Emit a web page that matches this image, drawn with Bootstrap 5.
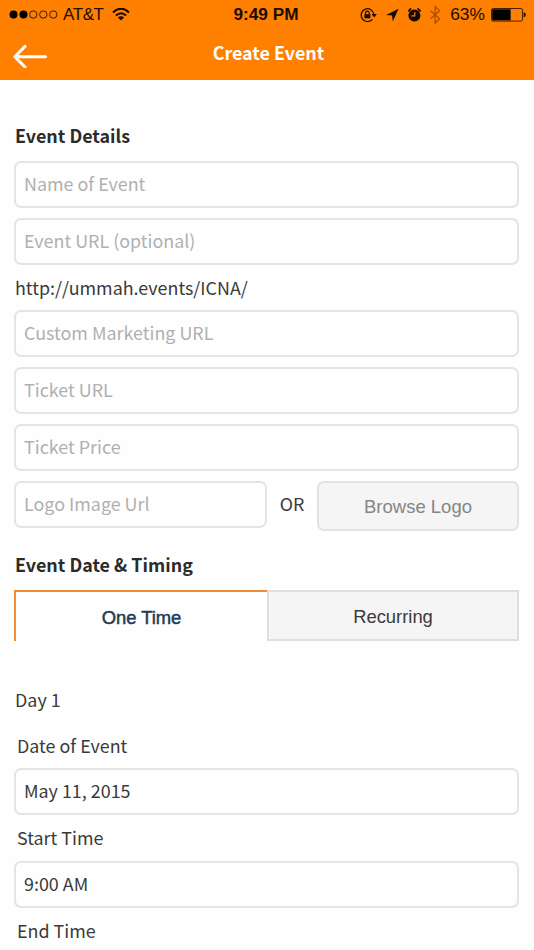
<!DOCTYPE html>
<html lang="en">
<head>
<meta charset="utf-8">
<meta name="viewport" content="width=device-width, initial-scale=1">
<title>Create Event</title>
<link href="https://cdn.jsdelivr.net/npm/bootstrap@5.3.0/dist/css/bootstrap.min.css" rel="stylesheet">
<style>
  body { font-family: "Noto Sans CJK SC", sans-serif; font-size: 17.9px; line-height: 26px; color: #3a3a3a; height: 950px; overflow: hidden; background: #fefefe; }
  .app-header { background: #ff8000; height: 80px; }
  .status-bar { height: 29px; font-family: "Liberation Sans", Arial, sans-serif; font-size: 17px; line-height: 29px; color: #1c0c00; }
  .status-side { flex: 1 1 0; }
  .status-bar svg, .title-bar svg { display: block; flex: none; }
  .carrier { letter-spacing: -.4px; margin-left: 5px; }
  .wifi { margin-left: 8px; }
  .clock { font-size: 17.2px; padding-right: 2px; }
  .battery-text { font-size: 17.4px; margin-left: 3px; }
  .title-bar { height: 51px; color: #fff; }
  .title-bar h1 { font-size: 17.9px; line-height: 26px; padding: 0 0 5px 3px; }
  .title-side { width: 60px; padding-left: 13px; }
  .page-body { padding: 31px 15px 0 14px; }
  .section-title { font-size: 17.9px; line-height: 26px; color: #2b2b2b; padding: 11px 0 13px 1px; }
  .form-control { height: 47px; border: 2px solid #e4e4e4; border-radius: 7px; padding: 0 8px 3px; font-size: 17.9px; line-height: 26px; color: #3a3a3a; background: #fefefe; }
  .form-control::placeholder { color: #b0b0b0; }
  .stack { display: grid; row-gap: 10px; }
  .url-note { height: 45px; padding: 9px 0 0 1px; }
  .logo-row { margin-top: 10px; height: 50px; }
  .logo-field { width: 253px; }
  .or-text { width: 50px; line-height: 44px; }
  .browse { height: 50px; font-family: "Liberation Sans", Arial, sans-serif; font-size: 18.5px; color: #858585; background: #f5f5f5; border: 2px solid #e2e2e2; border-radius: 7px; padding: 1px 0 0; }
  .timing-title { margin-top: 9px; }
  .tabs { height: 51px; font-family: "Liberation Sans", Arial, sans-serif; font-size: 18.4px; }
  .tabs .nav-link { height: 51px; border-radius: 0; padding: 2px 0 0; color: #3a3a3a; background: #f5f5f5; border: 2px solid #dfdfdf; width: 252px; flex: none; }
  .tabs .nav-link.active { color: #1e3c58; background: #fefefe; border: 0 solid #ee8f35; border-width: 2px 0 0 2px; width: 253px; -webkit-text-stroke: .5px #1e3c58; }
  .day-title { margin: 45px 0 10px 1px; height: 26px; }
  .form-label { display: block; margin: 0; padding-left: 3px; height: 46px; padding-top: 10px; }
  .time-label { height: 46px; padding-top: 9px; }
</style>
</head>
<body>
<header class="app-header">
  <div class="status-bar d-flex align-items-center">
    <div class="status-side d-flex align-items-center">
      <svg class="ms-2" width="50" height="12" viewBox="0 0 50 12" fill="none" stroke="#3a1c00" stroke-width="1"><circle cx="5.5" cy="5.5" r="4" fill="#000" stroke="none"/><circle cx="15.5" cy="5.5" r="4" fill="#000" stroke="none"/><circle cx="25.3" cy="5.5" r="3.7"/><circle cx="35.3" cy="5.5" r="3.7"/><circle cx="45.3" cy="5.5" r="3.7"/></svg>
      <span class="carrier">AT&amp;T</span>
      <svg class="wifi" width="18" height="14" viewBox="0 0 18 14" fill="none" stroke="#180800" stroke-width="2"><path d="M1 4.5Q9-3.1 17 4.5M3.9 7.6Q9 2.9 14.1 7.6"/><path d="M9 12.5 5.9 9.5Q9 6.9 12.1 9.5Z" fill="#180800" stroke="none"/></svg>
    </div>
    <strong class="clock">9:49 PM</strong>
    <div class="status-side d-flex align-items-center justify-content-end">
      <svg width="88" height="22" viewBox="0 0 88 22" fill="none" stroke="#1c0c00"><path d="M13.4 15.3A6.4 6.4 0 1 1 14.9 10.5" stroke-width="1.3"/><path d="M12.5 10h5.4l-2.7 3.5Z" fill="#1c0c00" stroke="none"/><path d="M5.4 10.2h6v4.1h-6Z" fill="#1c0c00" stroke="none"/><path d="M6.6 10.5V8.9a1.8 1.8 0 0 1 3.6 0v1.6" stroke-width="1.2"/><path d="M39.6 4.8 27 11l6 .6.8 6Z" fill="#1c0c00" stroke="none"/><circle cx="55.4" cy="11.4" r="6" fill="#140800" stroke="none"/><path d="M49.7 6.8 51.7 4.9M59.1 4.9 61.1 6.8" stroke-width="1.7" stroke-linecap="round"/><path d="M55.8 8v3.9h-3.4" stroke="#ff8000" stroke-width="1.2"/><path d="M71.6 6.8 80.6 14.8 76.2 19V2.6L80.6 6.8 71.6 14.8" stroke="#a65300" stroke-width="1.4"/></svg>
      <span class="battery-text">63%</span>
      <svg class="ms-1 me-2" width="37" height="16" viewBox="0 0 37 16"><rect x="2.5" y="1.5" width="31" height="12.6" rx="1.6" fill="none" stroke="#442000"/><path d="M3.2 2.3h18.4v11H3.2Z" fill="#000"/><path d="M34.6 5.3q2.2.4 2.2 2.5t-2.2 2.5Z" fill="#1c0c00"/></svg>
    </div>
  </div>
  <div class="title-bar d-flex align-items-center justify-content-between">
    <a class="title-side" href="#" aria-label="Back"><svg width="35" height="26" viewBox="0 0 35 26" fill="none" stroke="#fff" stroke-width="3" stroke-linecap="round" stroke-linejoin="round"><path d="M32.5 14.7H2M12 4.4 1.8 14.7 12 25" /></svg></a>
    <h1 class="m-0 fw-bold">Create Event</h1>
    <span class="title-side"></span>
  </div>
</header>
<main class="page-body">
  <form>
    <h2 class="section-title m-0 fw-bold">Event Details</h2>
    <div class="stack">
      <input class="form-control" type="text" placeholder="Name of Event">
      <input class="form-control" type="text" placeholder="Event URL (optional)">
    </div>
    <div class="url-note">http://ummah.events/ICNA/</div>
    <div class="stack">
      <input class="form-control" type="text" placeholder="Custom Marketing URL">
      <input class="form-control" type="text" placeholder="Ticket URL">
      <input class="form-control" type="text" placeholder="Ticket Price">
    </div>
    <div class="logo-row d-flex align-items-start">
      <input class="form-control logo-field flex-shrink-0" type="text" placeholder="Logo Image Url">
      <span class="or-text text-center flex-shrink-0">OR</span>
      <button class="btn browse flex-grow-1" type="button">Browse Logo</button>
    </div>
    <h2 class="section-title timing-title mb-0 fw-bold">Event Date &amp; Timing</h2>
    <div class="nav tabs flex-nowrap">
      <a class="nav-link active d-flex align-items-center justify-content-center" href="#">One Time</a>
      <a class="nav-link d-flex align-items-center justify-content-center" href="#">Recurring</a>
    </div>
    <div class="day-title">Day 1</div>
    <label class="form-label" for="date">Date of Event</label>
    <input class="form-control" id="date" type="text" value="May 11, 2015">
    <label class="form-label time-label" for="start">Start Time</label>
    <input class="form-control" id="start" type="text" value="9:00 AM">
    <span class="form-label time-label">End Time</span>
  </form>
</main>
<script src="https://cdn.jsdelivr.net/npm/bootstrap@5.3.0/dist/js/bootstrap.bundle.min.js"></script>
</body>
</html>
